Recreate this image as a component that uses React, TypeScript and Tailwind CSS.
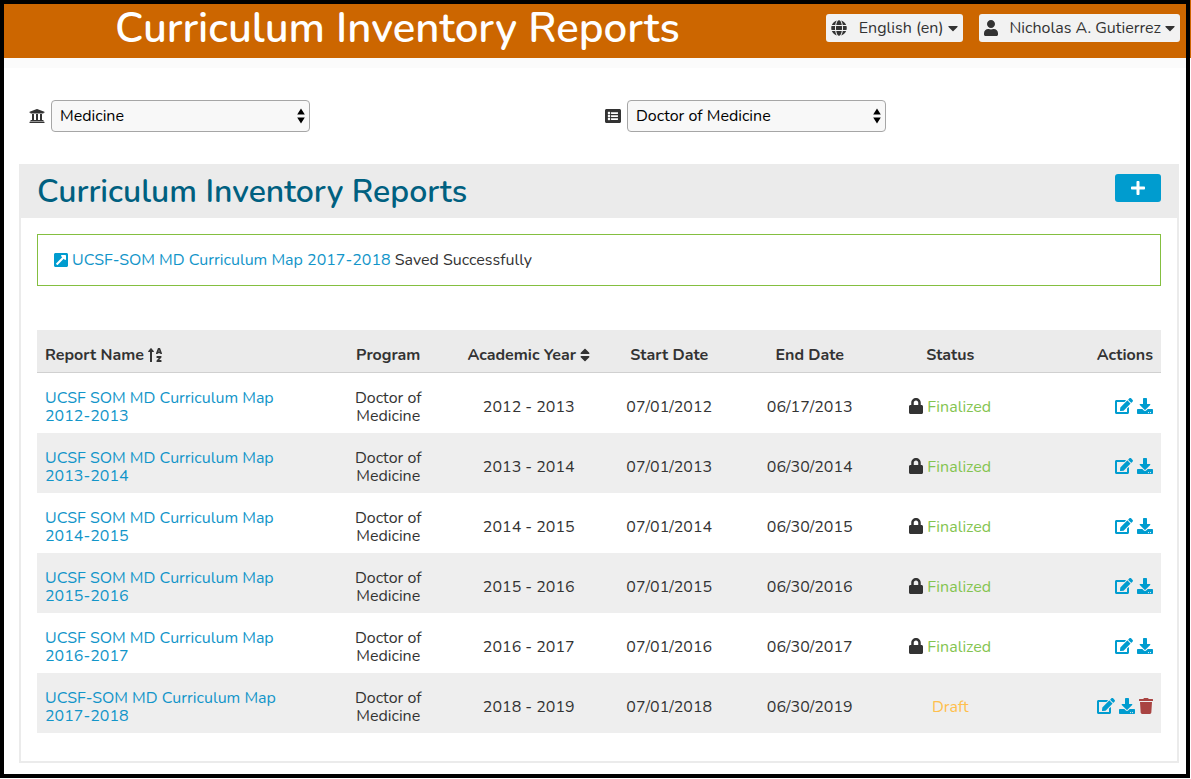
import type { ReactNode } from "react";
import {
  FaCaretDown,
  FaDownload,
  FaEdit,
  FaExternalLinkSquareAlt,
  FaGlobe,
  FaListAlt,
  FaLock,
  FaPlus,
  FaSort,
  FaSortAlphaUp,
  FaTrash,
  FaUniversity,
  FaUser,
} from "react-icons/fa";

type Report = {
  name: string;
  year: string;
  start: string;
  end: string;
  finalized: boolean;
};

const reports: Report[] = [
  { name: "UCSF SOM MD Curriculum Map 2012-2013", year: "2012 - 2013", start: "07/01/2012", end: "06/17/2013", finalized: true },
  { name: "UCSF SOM MD Curriculum Map 2013-2014", year: "2013 - 2014", start: "07/01/2013", end: "06/30/2014", finalized: true },
  { name: "UCSF SOM MD Curriculum Map 2014-2015", year: "2014 - 2015", start: "07/01/2014", end: "06/30/2015", finalized: true },
  { name: "UCSF SOM MD Curriculum Map 2015-2016", year: "2015 - 2016", start: "07/01/2015", end: "06/30/2016", finalized: true },
  { name: "UCSF SOM MD Curriculum Map 2016-2017", year: "2016 - 2017", start: "07/01/2016", end: "06/30/2017", finalized: true },
  { name: "UCSF-SOM MD Curriculum Map 2017-2018", year: "2018 - 2019", start: "07/01/2018", end: "06/30/2019", finalized: false },
];

function HeaderMenu({ icon, label }: { icon: ReactNode; label: string }) {
  return (
    <button type="button" className="flex h-7 items-center rounded-[3px] bg-[#f2f2f2] px-[5px] text-[#333]">
      {icon}
      <span className="ml-3 mr-1 whitespace-nowrap">{label}</span>
      <FaCaretDown className="h-4 w-[10px]" aria-hidden />
    </button>
  );
}

function Picker({ id, label, icon, value }: { id: string; label: string; icon: ReactNode; value: string }) {
  return (
    <div className="flex w-1/2 items-center">
      <label htmlFor={id} aria-label={label} className="mr-[6px] text-[#333]">
        {icon}
      </label>
      <div className="relative">
        <select
          id={id}
          defaultValue={value}
          className="h-8 w-[259px] appearance-none rounded-[4px] border border-[#a6a6a6] bg-[#f8f8f8] pl-2 pr-6 text-black"
        >
          <option>{value}</option>
        </select>
        <svg viewBox="0 0 8 16" className="pointer-events-none absolute right-[5px] top-2 h-4 w-2" aria-hidden>
          <path d="M4 0.5L7.8 6.5H0.2ZM4 15.5L0.2 9.5H7.8Z" fill="#000" />
        </svg>
      </div>
    </div>
  );
}

export default function App() {
  return (
    <div className="mr-px min-h-[778px] border-4 border-black bg-white font-['Nunito','Lato',sans-serif] text-[16px] leading-[18px] text-[#333]">
      <header className="relative flex h-[54px] items-start justify-between bg-[#cc6600] pr-[6px] after:absolute after:-right-[5px] after:-top-1 after:bottom-0 after:w-px after:bg-[#cc6600]">
        <h1 className="ml-[111px] text-[42px] font-semibold leading-[50px] text-white">Curriculum Inventory Reports</h1>
        <div className="mt-[10px] flex gap-4">
          <HeaderMenu icon={<FaGlobe className="size-4" aria-hidden />} label="English (en)" />
          <HeaderMenu icon={<FaUser className="h-4 w-[14px]" aria-hidden />} label="Nicholas A. Gutierrez" />
        </div>
      </header>
      <div className="h-[10px] bg-[#fbfbfb]" />

      <main className="pb-[11px] pl-[15px] pr-[7px]">
        <div className="-mr-0.5 mt-8 flex pl-[10px]">
          <Picker id="school" label="School" icon={<FaUniversity className="size-4" />} value="Medicine" />
          <Picker id="program" label="Program" icon={<FaListAlt className="size-4" />} value="Doctor of Medicine" />
        </div>

        <section className="mt-8 border-2 border-t-0 border-[#ebebeb]">
          <div className="flex h-[54px] items-start justify-between bg-[#ebebeb] px-4">
            <h2 className="pt-2 text-[32px] font-semibold leading-[40px] text-[#006080]">Curriculum Inventory Reports</h2>
            <button
              type="button"
              aria-label="New report"
              className="mt-[10px] flex h-7 w-[46px] items-center justify-center rounded-[3px] bg-[#009ccf] text-white"
            >
              <FaPlus className="size-4" aria-hidden />
            </button>
          </div>

          <div className="px-4 pb-7 pt-4">
            <p className="flex h-[52px] items-center border border-[#84bf40] px-4">
              <a href="#report" className="flex items-center text-[#1295c9]">
                <FaExternalLinkSquareAlt className="mr-1 h-4 w-[14px] text-[#009ccf]" aria-hidden />
                UCSF-SOM MD Curriculum Map 2017-2018
              </a>
              <span className="ml-1">Saved Successfully</span>
            </p>

            <table className="mt-11 w-full table-fixed border-separate border-spacing-0 text-center">
              <thead>
                <tr className="h-[43px] bg-[#ebebeb] *:border-b *:border-[#d0d0d0] *:px-2 *:pt-2">
                  <th className="w-1/4 text-left">
                    <button type="button" className="flex items-center gap-1 font-bold">
                      Report Name
                      <FaSortAlphaUp className="h-4 w-[14px]" aria-hidden />
                    </button>
                  </th>
                  <th>Program</th>
                  <th>
                    <button type="button" className="inline-flex items-center gap-1 whitespace-nowrap font-bold">
                      Academic Year
                      <FaSort className="h-4 w-[10px]" aria-hidden />
                    </button>
                  </th>
                  <th>Start Date</th>
                  <th>End Date</th>
                  <th>Status</th>
                  <th className="text-right">Actions</th>
                </tr>
              </thead>
              <tbody>
                {reports.map((r) => (
                  <tr key={r.name} className="h-[60px] even:bg-[#eeeeee]">
                    <td className="px-2 pt-2 text-left">
                      <a href="#report" className="block max-w-[240px] text-[#1295c9]">
                        {r.name}
                      </a>
                    </td>
                    <td className="px-5 pt-2">Doctor of Medicine</td>
                    <td className="px-2 pt-2">{r.year}</td>
                    <td className="px-2 pt-2">{r.start}</td>
                    <td className="px-2 pt-2">{r.end}</td>
                    <td className="px-2 pt-2">
                      {r.finalized ? (
                        <span className="flex items-start justify-center gap-1 text-[#84c450]">
                          <FaLock className="h-4 w-[14px] text-[#333]" aria-hidden />
                          Finalized
                        </span>
                      ) : (
                        <span className="text-[#ffbf4d]">Draft</span>
                      )}
                    </td>
                    <td className="px-2 pt-[6px]">
                      <div className="flex items-center justify-end gap-1 text-[#009ccf]">
                        <button type="button" aria-label="Edit">
                          <FaEdit className="h-4 w-[18px]" />
                        </button>
                        <a href="#download" aria-label="Download">
                          <FaDownload className="size-4" />
                        </a>
                        {!r.finalized && (
                          <button type="button" aria-label="Delete" className="text-[#a94442]">
                            <FaTrash className="h-4 w-[14px]" />
                          </button>
                        )}
                      </div>
                    </td>
                  </tr>
                ))}
              </tbody>
            </table>
          </div>
        </section>
      </main>
    </div>
  );
}
